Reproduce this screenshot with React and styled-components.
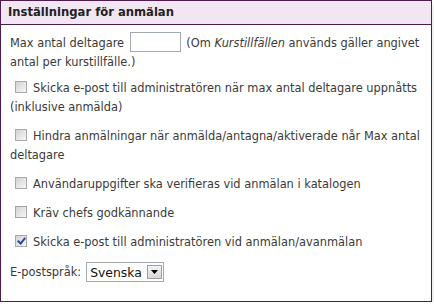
import React from 'react';
import styled, { createGlobalStyle } from 'styled-components';

const GlobalStyle = createGlobalStyle`
  body {
    margin: 0;
    background: #fff;
    font-family: "DejaVu Sans", Verdana, sans-serif;
  }
`;

const options = [
  { label: 'Skicka e-post till administratören när max antal deltagare uppnåtts (inklusive anmälda)', checked: false },
  { label: 'Hindra anmälningar när anmälda/antagna/aktiverade når Max antal deltagare', checked: false },
  { label: 'Användaruppgifter ska verifieras vid anmälan i katalogen', checked: false },
  { label: 'Kräv chefs godkännande', checked: false },
  { label: 'Skicka e-post till administratören vid anmälan/avanmälan', checked: true },
];

function App() {
  return (
    <>
      <GlobalStyle />
      <Panel>
        <Header>Inställningar för anmälan</Header>
        <Body>
          <Paragraph>
            Max antal deltagare <TextInput type="text" /> (Om <em>Kurstillfällen</em> används gäller angivet antal per kurstillfälle.)
          </Paragraph>
          {options.map((opt) => (
            <CheckRow key={opt.label}>
              <Check checked={opt.checked} readOnly type="checkbox" />
              {opt.label}
            </CheckRow>
          ))}
          <SelectRow>
            E-postspråk:
            <SelectBox>
              <SelectValue>Svenska</SelectValue>
              <SelectButton>
                <svg width="7" height="4" viewBox="0 0 7 4">
                  <polygon points="0,0 7,0 3.5,4" fill="#000" />
                </svg>
              </SelectButton>
            </SelectBox>
          </SelectRow>
        </Body>
      </Panel>
    </>
  );
}

export default App;

const Panel = styled.div`
  width: 430px;
  border: 1px solid #4e1c4e;
  box-shadow: 0 4px 4px -1px rgba(0, 0, 0, 0.28);
  background: #fff;
`;

const Header = styled.div`
  height: 23px;
  line-height: 23px;
  padding-left: 7px;
  background: #f2e6f2;
  border-bottom: 1px solid #4e1c4e;
  font-size: 11.6px;
  font-weight: bold;
  color: #222;
`;

const Body = styled.div`
  padding: 8px 6px 19px 9px;
  font-size: 11.4px;
  line-height: 19px;
  color: #3a3a3a;
`;

const Paragraph = styled.div`
  margin: 0 0 7px;

  em {
    font-style: italic;
  }
`;

const TextInput = styled.input`
  width: 51px;
  height: 20px;
  box-sizing: border-box;
  margin: 0 2px;
  padding: 0;
  border: 1px solid #a3a9b2;
  vertical-align: middle;
  position: relative;
  top: -1px;
`;

const CheckRow = styled.div`
  margin-bottom: 10px;
`;

const Check = styled.input`
  appearance: none;
  width: 12px;
  height: 12px;
  margin: 0 6px 0 5px;
  box-sizing: border-box;
  border: 1px solid #a7a7a7;
  background: linear-gradient(135deg, #d3d3d3 0%, #ececec 70%, #f8f8f8 100%);
  vertical-align: middle;
  position: relative;
  top: -2px;

  &:checked::after {
    content: '';
    position: absolute;
    left: 3px;
    top: 0px;
    width: 3px;
    height: 6px;
    border: solid #2b4aa0;
    border-width: 0 2px 2px 0;
    transform: rotate(40deg);
  }
`;

const SelectRow = styled.div`
  display: flex;
  align-items: center;
  gap: 5px;
  margin-top: 2px;
`;

const SelectBox = styled.div`
  display: inline-flex;
  align-items: center;
  width: 78px;
  height: 20px;
  box-sizing: border-box;
  border: 1px solid #a3a9b2;
  background: #fff;
  padding: 0 1px 0 3px;
  font-size: 12.4px;
  color: #111;
`;

const SelectValue = styled.span`
  flex: 1;
`;

const SelectButton = styled.span`
  display: flex;
  align-items: center;
  justify-content: center;
  width: 15px;
  height: 14px;
  box-sizing: border-box;
  border: 1px solid #9aa0a8;
  background: linear-gradient(#f4f4f4, #d8d8d8);
`;
